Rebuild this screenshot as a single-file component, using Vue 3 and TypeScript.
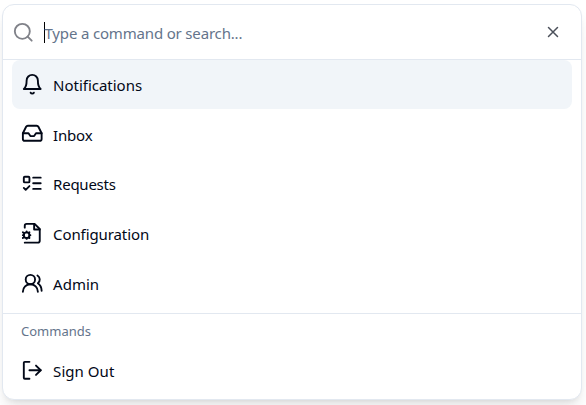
<script setup lang="ts">
interface Item {
  label: string
  tracking: number
  paths: string[]
}

const pages: Item[] = [
  {
    label: 'Notifications',
    tracking: -0.02,
    paths: ['M6 8a6 6 0 0 1 12 0c0 7 3 9 3 9H3s3-2 3-9', 'M10.3 21a1.94 1.94 0 0 0 3.4 0'],
  },
  {
    label: 'Inbox',
    tracking: -0.2,
    paths: [
      'M22 12h-6l-2 3h-4l-2-3H2',
      'M5.45 5.11 2 12v6a2 2 0 0 0 2 2h16a2 2 0 0 0 2-2v-6l-3.45-6.89A2 2 0 0 0 16.76 4H7.24a2 2 0 0 0-1.79 1.11z',
    ],
  },
  {
    label: 'Requests',
    tracking: -0.25,
    paths: [
      'M4 5h4a1 1 0 0 1 1 1v4a1 1 0 0 1-1 1H4a1 1 0 0 1-1-1V6a1 1 0 0 1 1-1z',
      'm3 17 2 2 4-4',
      'M13 6h8M13 12h8M13 18h8',
    ],
  },
  {
    label: 'Configuration',
    tracking: -0.1,
    paths: [
      'M4 22h14a2 2 0 0 0 2-2V7.5L14.5 2H6a2 2 0 0 0-2 2v2',
      'M14 2v6h6',
      'M6 11a3 3 0 1 0 0 6a3 3 0 1 0 0-6',
      'M6 10v1M6 17v1M10 14H9M3 14H2M9 11l-.88.5M2.88 16.5 2 17M9 17l-.88-.5M2.88 11.5 2 11',
    ],
  },
  {
    label: 'Admin',
    tracking: 0,
    paths: [
      'M18 21a8 8 0 0 0-16 0',
      'M10 3a5 5 0 1 0 0 10a5 5 0 1 0 0-10',
      'M22 20c0-3.37-2-6.5-4-8a5 5 0 0 0-.45-8.3',
    ],
  },
]

const commands: Item[] = [
  {
    label: 'Sign Out',
    tracking: 0.05,
    paths: ['M9 21H4a1 1 0 0 1-1-1V4a1 1 0 0 1 1-1h5', 'm16 17 5-5-5-5', 'M21 12H9'],
  },
]
</script>

<template>
  <div class="stage">
    <div class="dialog" role="dialog">
      <div class="search">
        <svg class="icon muted" viewBox="0 0 24 24"><circle cx="11" cy="11" r="8" /><path d="m21 21-4.3-4.3" /></svg>
        <span class="caret"></span>
        <span class="placeholder">Type a command or search...</span>
        <svg class="close" viewBox="0 0 24 24"><path d="M18 6 6 18M6 6l12 12" /></svg>
      </div>
      <div class="list">
        <div v-for="(item, i) in pages" :key="item.label" class="item" :class="{ active: i === 0 }">
          <svg class="icon" viewBox="0 0 24 24"><path v-for="d in item.paths" :key="d" :d="d" /></svg>
          <span class="label" :style="{ letterSpacing: item.tracking + 'px' }">{{ item.label }}</span>
        </div>
      </div>
      <div class="group">
        <div class="heading">Commands</div>
        <div v-for="item in commands" :key="item.label" class="item">
          <svg class="icon" viewBox="0 0 24 24"><path v-for="d in item.paths" :key="d" :d="d" /></svg>
          <span class="label" :style="{ letterSpacing: item.tracking + 'px' }">{{ item.label }}</span>
        </div>
      </div>
    </div>
  </div>
</template>

<style>
body {
  background: #fff;
  overflow: hidden;
}
</style>

<style scoped>
.stage {
  box-sizing: border-box;
  height: 405px;
  padding: 4px 4px 5px 2px;
  overflow: hidden;
  font-family: "Noto Sans", "Open Sans", sans-serif;
  font-size: 15px;
  color: #020817;
}
.dialog {
  box-sizing: border-box;
  height: 396px;
  border: 1px solid #e2e8f0;
  border-radius: 12px;
  background: #fff;
  box-shadow: 0 10px 15px -3px rgba(0, 0, 0, 0.1), 0 4px 6px -4px rgba(0, 0, 0, 0.1);
}
.search {
  display: flex;
  align-items: center;
  box-sizing: border-box;
  height: 55px;
  padding: 0 19px 0 9px;
  border-bottom: 1px solid #e2e8f0;
}
.icon {
  width: 22.5px;
  height: 22.5px;
  flex: none;
  fill: none;
  stroke: currentColor;
  stroke-width: 2;
  stroke-linecap: round;
  stroke-linejoin: round;
}
.muted {
  color: #808289;
}
.caret {
  width: 1px;
  height: 21px;
  margin: 0 0 0 9.5px;
  background: #000;
}
.placeholder {
  flex: 1;
  margin-left: -0.5px;
  color: #64748b;
  letter-spacing: -0.17px;
  line-height: 24px;
  padding-top: 2px;
}
.close {
  width: 18px;
  height: 18px;
  fill: none;
  stroke: #4b505a;
  stroke-width: 2;
  stroke-linecap: round;
}
.list {
  box-sizing: border-box;
  height: 254px;
  padding: 0 9px;
  border-bottom: 1px solid #e2e8f0;
}
.item {
  display: flex;
  align-items: center;
  gap: 9.6px;
  box-sizing: border-box;
  height: 49.7px;
  padding: 0 9px 1px;
  border-radius: 8px;
}
.item.active {
  height: 49px;
  background: #f1f5f9;
}
.item.active + .item {
  margin-top: 0.4px;
}
.label {
  line-height: 24px;
  padding-top: 2px;
}
.group {
  padding: 0 9px;
}
.heading {
  padding: 7px 9px 5px;
  font-size: 13px;
  line-height: 20px;
  color: #64748b;
}
</style>
